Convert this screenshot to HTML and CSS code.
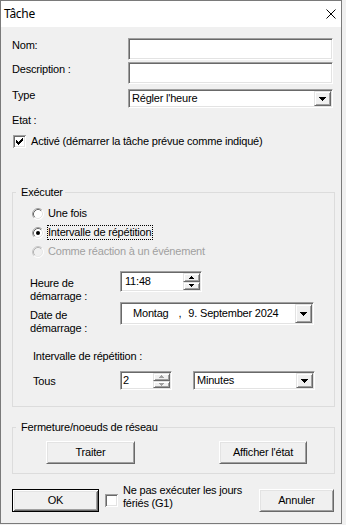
FILE: index.html
```html
<!DOCTYPE html>
<html lang="fr">
<head>
<meta charset="utf-8">
<title>Tâche</title>
<link rel="stylesheet" href="styles.css">
</head>
<body>
<div class="window">
  <div class="titlebar">
    <span class="title">Tâche</span>
    <svg class="close" width="10" height="10" viewBox="0 0 10 10"><path d="M0.5 0.5L9.5 9.5M9.5 0.5L0.5 9.5" stroke="#000" stroke-width="1" fill="none"/></svg>
  </div>
  <div class="client">
    <div class="frow r-nom">
      <span class="flabel">Nom:</span>
      <div class="sunken field"></div>
    </div>
    <div class="frow r-desc">
      <span class="flabel">Description :</span>
      <div class="sunken field"></div>
    </div>
    <div class="frow r-type">
      <span class="flabel l-type">Type</span>
      <div class="sunken combo c-type">
        <span class="ctext">Régler l'heure</span>
        <span class="raised dropbtn"><svg width="7" height="4" viewBox="0 0 7 4" shape-rendering="crispEdges"><path d="M0 0h7v1h-7z M1 1h5v1h-5z M2 2h3v1h-3z M3 3h1v1h-1z" fill="#000"/></svg></span>
      </div>
    </div>
    <div class="etat">Etat :</div>
    <div class="chkrow r-active">
      <svg class="chk" width="13" height="13" viewBox="0 0 13 13" shape-rendering="crispEdges"><rect width="13" height="13" fill="#fff"/><path d="M0 0H13V1H1V13H0Z" fill="#a0a0a0"/><path d="M1 1H12V2H2V12H1Z" fill="#696969"/><path d="M11 2H12V12H2V11H11Z" fill="#e3e3e3"/><path d="M3 5h1v3h-1z M4 6h1v3h-1z M5 7h1v3h-1z M6 6h1v3h-1z M7 5h1v3h-1z M8 4h1v3h-1z M9 3h1v3h-1z" fill="#000"/></svg>
      <span class="chktext">Activé (démarrer la tâche prévue comme indiqué)</span>
    </div>

    <div class="group g-exec">
      <span class="legend">Exécuter</span>
      <div class="radios">
        <div class="radio-row">
          <svg class="radio" width="12" height="12" viewBox="0 0 12 12"><circle cx="6" cy="6" r="5.5" fill="#fff"/><path d="M2.11 9.89A5.5 5.5 0 0 1 9.89 2.11" stroke="#a0a0a0" fill="none"/><path d="M9.89 2.11A5.5 5.5 0 0 1 2.11 9.89" stroke="#fff" fill="none"/><path d="M2.82 9.18A4.5 4.5 0 0 1 9.18 2.82" stroke="#696969" fill="none"/><path d="M9.18 2.82A4.5 4.5 0 0 1 2.82 9.18" stroke="#e3e3e3" fill="none"/></svg>
          <span class="rtext">Une fois</span>
        </div>
        <div class="radio-row">
          <svg class="radio" width="12" height="12" viewBox="0 0 12 12"><circle cx="6" cy="6" r="5.5" fill="#fff"/><path d="M2.11 9.89A5.5 5.5 0 0 1 9.89 2.11" stroke="#a0a0a0" fill="none"/><path d="M9.89 2.11A5.5 5.5 0 0 1 2.11 9.89" stroke="#fff" fill="none"/><path d="M2.82 9.18A4.5 4.5 0 0 1 9.18 2.82" stroke="#696969" fill="none"/><path d="M9.18 2.82A4.5 4.5 0 0 1 2.82 9.18" stroke="#e3e3e3" fill="none"/><circle cx="6" cy="6" r="2" fill="#000"/></svg>
          <span class="rtext focus">Intervalle de répétition</span>
        </div>
        <div class="radio-row disabled">
          <svg class="radio" width="12" height="12" viewBox="0 0 12 12"><circle cx="6" cy="6" r="5.5" fill="#f0f0f0"/><path d="M2.11 9.89A5.5 5.5 0 0 1 9.89 2.11" stroke="#c8c8c8" fill="none"/><path d="M9.89 2.11A5.5 5.5 0 0 1 2.11 9.89" stroke="#fff" fill="none"/><path d="M2.82 9.18A4.5 4.5 0 0 1 9.18 2.82" stroke="#b4b4b4" fill="none"/><path d="M9.18 2.82A4.5 4.5 0 0 1 2.82 9.18" stroke="#e8e8e8" fill="none"/></svg>
          <span class="rtext">Comme réaction à un événement</span>
        </div>
      </div>

      <div class="grow g-heure">
        <span class="glabel">Heure de<br>démarrage :</span>
        <div class="sunken spin s-time">
          <span class="stext">11:48</span>
          <span class="spinner">
            <span class="raised sbtn"><svg width="5" height="3" viewBox="0 0 5 3" shape-rendering="crispEdges"><path d="M2 0h1v1h-1z M1 1h3v1h-3z M0 2h5v1h-5z" fill="#000"/></svg></span>
            <span class="raised sbtn"><svg width="5" height="3" viewBox="0 0 5 3" shape-rendering="crispEdges"><path d="M0 0h5v1h-5z M1 1h3v1h-3z M2 2h1v1h-1z" fill="#000"/></svg></span>
          </span>
        </div>
      </div>

      <div class="grow g-date">
        <span class="glabel">Date de<br>démarrage :</span>
        <div class="sunken datepick">
          <span class="dp-text"><span class="dp-day">Montag</span><span class="dp-comma">,</span><span class="dp-date">9. September 2024</span></span>
          <span class="raised dropbtn"><svg width="7" height="4" viewBox="0 0 7 4" shape-rendering="crispEdges"><path d="M0 0h7v1h-7z M1 1h5v1h-5z M2 2h3v1h-3z M3 3h1v1h-1z" fill="#000"/></svg></span>
        </div>
      </div>

      <div class="ilabel">Intervalle de répétition :</div>

      <div class="grow g-tous">
        <span class="glabel tous">Tous</span>
        <div class="sunken spin s-num">
          <span class="stext num">2</span>
          <span class="spinner">
            <span class="raised sbtn"><svg width="5" height="3" viewBox="0 0 5 3" shape-rendering="crispEdges"><path d="M2 0h1v1h-1z M1 1h3v1h-3z M0 2h5v1h-5z" fill="#a0a0a0"/></svg></span>
            <span class="raised sbtn"><svg width="5" height="3" viewBox="0 0 5 3" shape-rendering="crispEdges"><path d="M0 0h5v1h-5z M1 1h3v1h-3z M2 2h1v1h-1z" fill="#a0a0a0"/></svg></span>
          </span>
        </div>
        <div class="sunken combo c-min">
          <span class="ctext">Minutes</span>
          <span class="raised dropbtn"><svg width="7" height="4" viewBox="0 0 7 4" shape-rendering="crispEdges"><path d="M0 0h7v1h-7z M1 1h5v1h-5z M2 2h3v1h-3z M3 3h1v1h-1z" fill="#000"/></svg></span>
        </div>
      </div>
    </div>

    <div class="group g-net">
      <span class="legend">Fermeture/noeuds de réseau</span>
      <div class="net-btns">
        <button class="btn b-traiter">Traiter</button>
        <button class="btn b-afficher">Afficher l'état</button>
      </div>
    </div>

    <div class="footer">
      <button class="btn btn-default b-ok">OK</button>
      <svg class="chk f-chk" width="13" height="13" viewBox="0 0 13 13" shape-rendering="crispEdges"><rect width="13" height="13" fill="#fff"/><path d="M0 0H13V1H1V13H0Z" fill="#a0a0a0"/><path d="M1 1H12V2H2V12H1Z" fill="#696969"/><path d="M11 2H12V12H2V11H11Z" fill="#e3e3e3"/></svg>
      <span class="ftext">Ne pas exécuter les jours<br>fériés (G1)</span>
      <button class="btn b-annuler">Annuler</button>
    </div>
  </div>
</div>
</body>
</html>
```

FILE: styles.css
```css
* { box-sizing: border-box; }

html, body {
  margin: 0;
  padding: 0;
}

body {
  background: #f0f0f0;
  font-family: "Liberation Sans", Arial, sans-serif;
  font-size: 11px;
  line-height: 13px;
  letter-spacing: -0.2px;
  color: #000;
}

.window {
  width: 342px;
  height: 524px;
  border: 1px solid #7a7a7a;
  background: #f0f0f0;
  display: flex;
  flex-direction: column;
}

.titlebar {
  flex: none;
  height: 26px;
  background: #fff;
  display: flex;
  align-items: center;
  justify-content: space-between;
  padding: 0 5px 0 3px;
}

.title {
  font-family: "Noto Sans", "Liberation Sans", sans-serif;
  font-size: 12px;
  letter-spacing: -0.3px;
  line-height: 16px;
}

.close { display: block; }

.client {
  flex: 1;
  padding-left: 11px;
}

/* 3D borders */
.sunken {
  background: #fff;
  border: 1px solid;
  border-color: #a0a0a0 #fff #fff #a0a0a0;
  box-shadow: inset 1px 1px 0 #696969, inset -1px -1px 0 #e3e3e3;
}

.raised {
  background: #f0f0f0;
  border: 1px solid;
  border-color: #e3e3e3 #696969 #696969 #e3e3e3;
  box-shadow: inset 1px 1px 0 #fff, inset -1px -1px 0 #a0a0a0;
  display: flex;
  align-items: center;
  justify-content: center;
}

/* top form */
.frow {
  display: flex;
  align-items: flex-start;
}
.r-nom { margin-top: 11px; height: 22px; }
.r-desc { margin-top: 2px; height: 22px; }
.r-type { margin-top: 5px; height: 19px; }

.flabel {
  flex: none;
  width: 116px;
  padding-top: 1px;
}
.l-type { padding-top: 0; }

.field {
  width: 205px;
  height: 22px;
}

.combo {
  display: flex;
  align-items: stretch;
  padding: 1px;
}
.c-type {
  width: 205px;
  height: 19px;
}
.ctext {
  flex: 1;
  padding-left: 2px;
  align-self: center;
  white-space: nowrap;
}
.dropbtn {
  flex: none;
  width: 17px;
}
.dropbtn svg { display: block; }

.etat { margin-top: 6px; }

.chkrow {
  display: flex;
  align-items: flex-start;
}
.r-active {
  margin-top: 8px;
  height: 13px;
  padding-left: 1px;
}
.chk { display: block; flex: none; }
.chktext { margin-left: 5px; white-space: nowrap; }

/* group boxes */
.group {
  position: relative;
  width: 323px;
  border: 1px solid #dcdcdc;
}
.legend {
  position: absolute;
  top: -7px;
  left: 3px;
  padding: 0 2px 0 5px;
  background: #f0f0f0;
  white-space: nowrap;
}

.g-exec {
  margin-top: 44px;
  height: 215px;
}

.radios {
  margin-top: 11px;
  padding-left: 19px;
}
.radio-row {
  height: 19px;
  display: flex;
  align-items: center;
}
.radio {
  display: block;
  flex: none;
  margin-right: 4px;
}
.rtext { white-space: nowrap; }
.rtext.focus {
  margin-left: -1px;
  border: 1px dotted #000;
  padding: 0 1px 0 0;
}
.disabled .rtext { color: #a0a0a0; }

.grow {
  display: flex;
  align-items: flex-start;
}
.glabel {
  flex: none;
  width: 90px;
  margin-left: 17px;
  white-space: nowrap;
}

.g-heure { margin-top: 10px; height: 31px; }
.g-heure .glabel { padding-top: 6px; }

.spin {
  display: flex;
  align-items: stretch;
  padding: 1px;
}
.s-time { width: 82px; height: 21px; }
.stext {
  flex: 1;
  padding-left: 3px;
  align-self: center;
}
.spinner {
  flex: none;
  width: 17px;
  display: flex;
  flex-direction: column;
}
.sbtn { flex: 1; }
.sbtn svg { display: block; }

.g-date { height: 23px; }
.g-date .glabel { padding-top: 7px; }

.datepick {
  width: 194px;
  height: 23px;
  display: flex;
  align-items: stretch;
  padding: 1px;
}
.dp-text {
  flex: 1;
  align-self: center;
  padding-left: 11px;
  white-space: nowrap;
}
.dp-comma { margin-left: 10px; }
.dp-date { margin-left: 7px; }

.ilabel {
  margin-top: 25px;
  margin-left: 20px;
}

.g-tous { margin-top: 8px; height: 19px; }
.glabel.tous {
  width: 87px;
  margin-left: 20px;
  padding-top: 4px;
}
.s-num { width: 52px; height: 19px; }
.stext.num { padding-left: 1px; }
.c-min {
  width: 122px;
  height: 19px;
  margin-left: 21px;
}

/* network group */
.g-net {
  margin-top: 20px;
  height: 47px;
}
.net-btns {
  display: flex;
  margin-top: 13px;
}

.btn {
  font: inherit;
  letter-spacing: inherit;
  color: #000;
  padding: 0;
  height: 23px;
  background: #f0f0f0;
  border: 1px solid;
  border-color: #fff #696969 #696969 #fff;
  box-shadow: inset 1px 1px 0 #e3e3e3, inset -1px -1px 0 #a0a0a0;
}
.btn-default {
  border-color: #000;
  box-shadow: inset 1px 1px 0 #fff, inset -1px -1px 0 #696969, inset 2px 2px 0 #e3e3e3, inset -2px -2px 0 #a0a0a0;
}

.b-traiter { width: 89px; margin-left: 33px; }
.b-afficher { width: 88px; margin-left: 84px; }

/* footer */
.footer {
  width: 322px;
  margin-top: 10px;
  display: flex;
  align-items: flex-start;
}
.b-ok { width: 87px; margin-top: 5px; }
.f-chk { margin-left: 6px; margin-top: 10px; }
.ftext { margin-left: 5px; white-space: nowrap; }
.b-annuler { width: 75px; margin-top: 5px; margin-left: auto; }
```
